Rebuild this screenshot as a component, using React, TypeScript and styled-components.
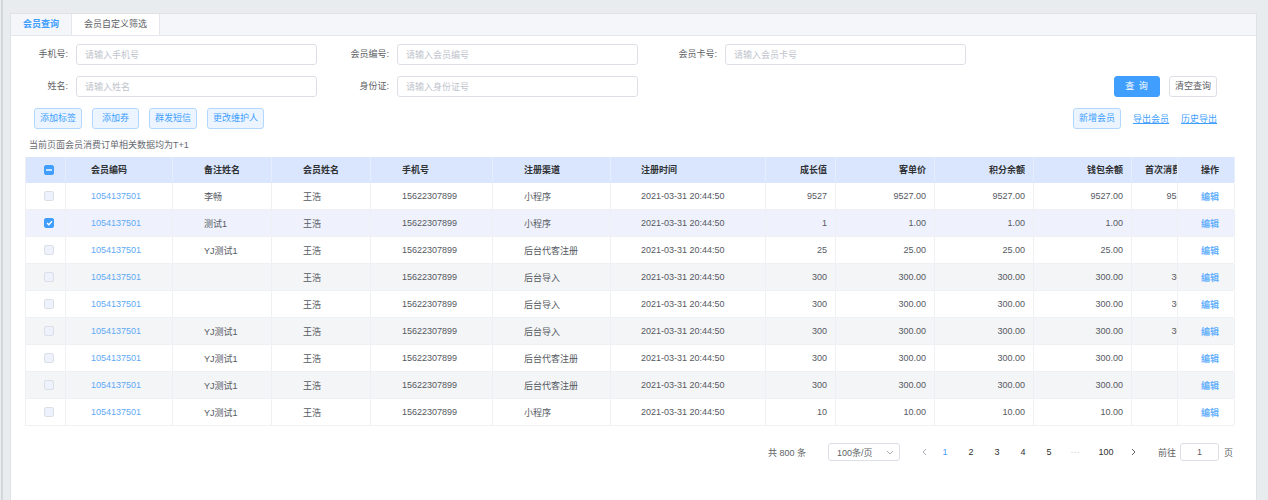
import React from "react";
import styled, { createGlobalStyle, css } from "styled-components";

const Global = createGlobalStyle`
  html, body { margin: 0; padding: 0; background: #e9ecef; }
  body { font-family: "Liberation Sans", "Noto Sans CJK SC", sans-serif; font-size: 9px; color: #606266; }
  * { box-sizing: border-box; }
`;

const Page = styled.div`
  min-height: 500px;
  margin-left: 1px;
  border-left: 2px solid #d3d6da;
  padding: 13px 11px 0 7px;
  background: #e9ecef;
`;

const Card = styled.div`
  background: #fff;
  border: 1px solid #dfe3e8;
  border-bottom: none;
  min-height: 487px;
`;

const TabBar = styled.div`
  display: flex;
  height: 22px;
  background: #f4f6f9;
  border-bottom: 1px solid #e4e7ed;
`;

const Tab = styled.div<{ $active?: boolean; $white?: boolean }>`
  padding: 0 12px;
  line-height: 21px;
  font-size: 9px;
  color: ${(p) => (p.$active ? "#409eff" : "#606266")};
  font-weight: ${(p) => (p.$active ? 600 : 400)};
  ${(p) =>
    p.$white &&
    css`
      background: #fff;
      border-left: 1px solid #e4e7ed;
      border-right: 1px solid #e4e7ed;
    `}
`;

const Content = styled.div`
  padding: 8px 23px 0 14px;
`;

const FormRow = styled.div<{ $top?: number }>`
  display: flex;
  align-items: center;
  height: 21px;
  margin-top: ${(p) => p.$top ?? 0}px;
`;

const FieldLabel = styled.label<{ $w: number }>`
  width: ${(p) => p.$w}px;
  padding-right: 8px;
  text-align: right;
  font-size: 9px;
  line-height: 21px;
  color: #606266;
  white-space: nowrap;
`;

const TextInput = styled.input`
  width: 241px;
  height: 21px;
  border: 1px solid #dcdfe6;
  border-radius: 3px;
  padding: 0 8px;
  font-family: inherit;
  font-size: 9px;
  color: #606266;
  outline: none;
  &::placeholder { color: #c0c4cc; }
`;

const Group = styled.div<{ $gap: number; $ml?: number; $mr?: number; $auto?: boolean }>`
  display: flex;
  align-items: center;
  gap: ${(p) => p.$gap}px;
  margin-left: ${(p) => (p.$auto ? "auto" : `${p.$ml ?? 0}px`)};
  margin-right: ${(p) => p.$mr ?? 0}px;
`;

const Button = styled.button<{ $kind: "primary" | "plain" | "light"; $w?: number }>`
  height: 21px;
  min-width: ${(p) => p.$w ?? 47}px;
  padding: 0 5px;
  border-radius: 3px;
  font-family: inherit;
  font-size: 9px;
  line-height: 19px;
  cursor: pointer;
  white-space: nowrap;
  ${(p) =>
    p.$kind === "primary"
      ? css`
          background: #409eff;
          border: 1px solid #409eff;
          color: #fff;
          letter-spacing: 1px;
        `
      : p.$kind === "plain"
      ? css`
          background: #fff;
          border: 1px solid #dcdfe6;
          color: #606266;
        `
      : css`
          background: #ecf5ff;
          border: 1px solid #b3d8ff;
          color: #409eff;
        `}
`;

const TextLink = styled.a`
  font-size: 9px;
  color: #409eff;
  text-decoration: underline;
  cursor: pointer;
`;

const Notice = styled.div`
  margin-top: 9px;
  padding-left: 4px;
  line-height: 14px;
  font-size: 9px;
  color: #686b72;
`;

const COLS = "40px 107px 99px 99px 122px 118px 155px 70px 99px 99px 98px 46px 57px";

const Table = styled.div`
  margin-top: 5px;
  width: 1209px;
  border-left: 1px solid #eef0f4;
`;

const Row = styled.div<{ $head?: boolean; $bg?: string }>`
  display: grid;
  grid-template-columns: ${COLS};
  height: ${(p) => (p.$head ? 26 : 27)}px;
  background: ${(p) => p.$bg ?? "#fff"};
  border-bottom: 1px solid ${(p) => (p.$head ? "#d9e6fd" : "#eef0f4")};
`;

const Cell = styled.div<{ $align?: "left" | "right"; $pl?: number; $pr?: number; $head?: boolean; $clip?: boolean }>`
  display: flex;
  align-items: center;
  justify-content: ${(p) => (p.$align === "right" ? "flex-end" : "flex-start")};
  padding-left: ${(p) => (p.$clip ? 0 : p.$pl ?? 0)}px;
  padding-right: ${(p) => (p.$clip ? 0 : p.$pr ?? 0)}px;
  border-right: 1px solid ${(p) => (p.$head ? "#e6eefc" : "#eef0f4")};
  overflow: hidden;
  white-space: nowrap;
  font-size: 9px;
  color: ${(p) => (p.$head ? "#303133" : "#55595f")};
  font-weight: ${(p) => (p.$head ? 600 : 400)};
`;

const ClipBox = styled.span`
  flex: 0 0 75px;
  width: 75px;
  padding-right: 8px;
  text-align: right;
`;

const CodeLink = styled.span`
  color: #5ea9f6;
`;

const EditLink = styled.span`
  color: #66b1ff;
  font-weight: 600;
`;

const Check = styled.span<{ $on?: boolean }>`
  width: 10px;
  height: 10px;
  border-radius: 2px;
  display: inline-flex;
  align-items: center;
  justify-content: center;
  background: ${(p) => (p.$on ? "#409eff" : "#edf2fc")};
  border: 1px solid ${(p) => (p.$on ? "#409eff" : "#dcdfe6")};
`;

const Pager = styled.div`
  margin-top: 17px;
  display: flex;
  justify-content: flex-end;
  align-items: center;
  height: 18px;
  font-size: 9px;
  color: #606266;
`;

const Total = styled.span`
  margin-right: 22px;
`;

const SelectBox = styled.div`
  width: 72px;
  height: 18px;
  border: 1px solid #dcdfe6;
  border-radius: 3px;
  display: flex;
  align-items: center;
  justify-content: space-between;
  padding: 0 5px 0 8px;
  margin-right: 19px;
`;

const PageItem = styled.span<{ $w: number; $active?: boolean; $muted?: boolean }>`
  width: ${(p) => p.$w}px;
  height: 18px;
  display: inline-flex;
  align-items: center;
  justify-content: center;
  color: ${(p) => (p.$active ? "#409eff" : p.$muted ? "#c0c4cc" : "#303133")};
`;

const JumpLabel = styled.span<{ $ml: number }>`
  margin-left: ${(p) => p.$ml}px;
`;

const JumpInput = styled.div`
  width: 39px;
  height: 18px;
  margin: 0 5px 0 4px;
  border: 1px solid #dcdfe6;
  border-radius: 3px;
  display: flex;
  align-items: center;
  justify-content: center;
  color: #606266;
`;

type Col = { title: string; w: number; align?: "left" | "right"; pl?: number; pr?: number };
const columns: Col[] = [
  { title: "", w: 40, pl: 18 },
  { title: "会员编码", w: 107, pl: 25 },
  { title: "备注姓名", w: 99, pl: 31 },
  { title: "会员姓名", w: 99, pl: 31 },
  { title: "手机号", w: 122, pl: 31 },
  { title: "注册渠道", w: 118, pl: 31 },
  { title: "注册时间", w: 155, pl: 30 },
  { title: "成长值", w: 70, align: "right", pr: 8 },
  { title: "客单价", w: 99, align: "right", pr: 8 },
  { title: "积分余额", w: 99, align: "right", pr: 8 },
  { title: "钱包余额", w: 98, align: "right", pr: 8 },
  { title: "首次消费金额", w: 46 },
  { title: "操作", w: 57, pl: 23 },
];

type Member = {
  remark: string;
  channel: string;
  growth: string;
  amount: string;
  first: string;
  checked?: boolean;
};

const rows: Member[] = [
  { remark: "李畅", channel: "小程序", growth: "9527", amount: "9527.00", first: "9527.00" },
  { remark: "测试1", channel: "小程序", growth: "1", amount: "1.00", first: "1.00", checked: true },
  { remark: "YJ测试1", channel: "后台代客注册", growth: "25", amount: "25.00", first: "" },
  { remark: "", channel: "后台导入", growth: "300", amount: "300.00", first: "300.00" },
  { remark: "", channel: "后台导入", growth: "300", amount: "300.00", first: "300.00" },
  { remark: "YJ测试1", channel: "后台导入", growth: "300", amount: "300.00", first: "300.00" },
  { remark: "YJ测试1", channel: "后台代客注册", growth: "300", amount: "300.00", first: "" },
  { remark: "YJ测试1", channel: "后台代客注册", growth: "300", amount: "300.00", first: "" },
  { remark: "YJ测试1", channel: "小程序", growth: "10", amount: "10.00", first: "" },
];

const CheckMark = () => (
  <svg width="7" height="6" viewBox="0 0 7 6">
    <path d="M1 3 L2.8 4.8 L6 1.2" fill="none" stroke="#fff" strokeWidth="1.3" />
  </svg>
);

const Minus = () => (
  <svg width="6" height="2" viewBox="0 0 6 2">
    <rect width="6" height="1.4" y="0.3" fill="#fff" />
  </svg>
);

const Chevron = ({ dir, color }: { dir: "left" | "right" | "down"; color: string }) => {
  const d = dir === "left" ? "M5 1 L2 4 L5 7" : dir === "right" ? "M3 1 L6 4 L3 7" : "M1 3 L4 6 L7 3";
  return (
    <svg width="8" height="8" viewBox="0 0 8 8">
      <path d={d} fill="none" stroke={color} strokeWidth="1" />
    </svg>
  );
};

function rowBg(i: number, checked?: boolean) {
  if (checked) return "#eff2fd";
  return i % 2 === 1 ? "#f4f5f7" : "#fff";
}

export default function App() {
  return (
    <>
      <Global />
      <Page>
        <Card>
          <TabBar>
            <Tab $active>会员查询</Tab>
            <Tab $white>会员自定义筛选</Tab>
          </TabBar>
          <Content>
            <FormRow>
              <FieldLabel $w={51}>手机号:</FieldLabel>
              <TextInput placeholder="请输入手机号" />
              <FieldLabel $w={80}>会员编号:</FieldLabel>
              <TextInput placeholder="请输入会员编号" />
              <FieldLabel $w={87}>会员卡号:</FieldLabel>
              <TextInput placeholder="请输入会员卡号" />
            </FormRow>
            <FormRow $top={11}>
              <FieldLabel $w={51}>姓名:</FieldLabel>
              <TextInput placeholder="请输入姓名" />
              <FieldLabel $w={80}>身份证:</FieldLabel>
              <TextInput placeholder="请输入身份证号" />
              <Group $gap={9} $auto $mr={16}>
                <Button $kind="primary" $w={46}>查 询</Button>
                <Button $kind="plain">清空查询</Button>
              </Group>
            </FormRow>
            <FormRow $top={11}>
              <Group $gap={10} $ml={9}>
                <Button $kind="light">添加标签</Button>
                <Button $kind="light">添加券</Button>
                <Button $kind="light">群发短信</Button>
                <Button $kind="light">更改维护人</Button>
              </Group>
              <Group $gap={12} $auto $mr={16}>
                <Button $kind="light">新增会员</Button>
                <TextLink>导出会员</TextLink>
                <TextLink>历史导出</TextLink>
              </Group>
            </FormRow>
            <Notice>当前页面会员消费订单相关数据均为T+1</Notice>
            <Table>
              <Row $head $bg="#d9e6fd">
                {columns.map((c, i) => (
                  <Cell key={i} $head $align={c.align} $pl={c.pl} $pr={c.pr} $clip={i === 11}>
                    {i === 0 ? (
                      <Check $on>
                        <Minus />
                      </Check>
                    ) : i === 11 ? (
                      <ClipBox>{c.title}</ClipBox>
                    ) : (
                      c.title
                    )}
                  </Cell>
                ))}
              </Row>
              {rows.map((r, i) => {
                const vals: React.ReactNode[] = [
                  <Check $on={r.checked}>{r.checked && <CheckMark />}</Check>,
                  <CodeLink>1054137501</CodeLink>,
                  r.remark,
                  "王浩",
                  "15622307899",
                  r.channel,
                  "2021-03-31 20:44:50",
                  r.growth,
                  r.amount,
                  r.amount,
                  r.amount,
                  <ClipBox>{r.first}</ClipBox>,
                  <EditLink>编辑</EditLink>,
                ];
                return (
                  <Row key={i} $bg={rowBg(i, r.checked)}>
                    {columns.map((c, j) => (
                      <Cell key={j} $align={c.align} $pl={c.pl} $pr={c.pr} $clip={j === 11}>
                        {vals[j]}
                      </Cell>
                    ))}
                  </Row>
                );
              })}
            </Table>
            <Pager>
              <Total>共 800 条</Total>
              <SelectBox>
                <span>100条/页</span>
                <Chevron dir="down" color="#a8abb2" />
              </SelectBox>
              <PageItem $w={13} $muted>
                <Chevron dir="left" color="#a8abb2" />
              </PageItem>
              <PageItem $w={26} $active>1</PageItem>
              <PageItem $w={26}>2</PageItem>
              <PageItem $w={26}>3</PageItem>
              <PageItem $w={26}>4</PageItem>
              <PageItem $w={26}>5</PageItem>
              <PageItem $w={26} $muted>···</PageItem>
              <PageItem $w={36}>100</PageItem>
              <PageItem $w={18}>
                <Chevron dir="right" color="#606266" />
              </PageItem>
              <JumpLabel $ml={16}>前往</JumpLabel>
              <JumpInput>1</JumpInput>
              <span>页</span>
            </Pager>
          </Content>
        </Card>
      </Page>
    </>
  );
}
